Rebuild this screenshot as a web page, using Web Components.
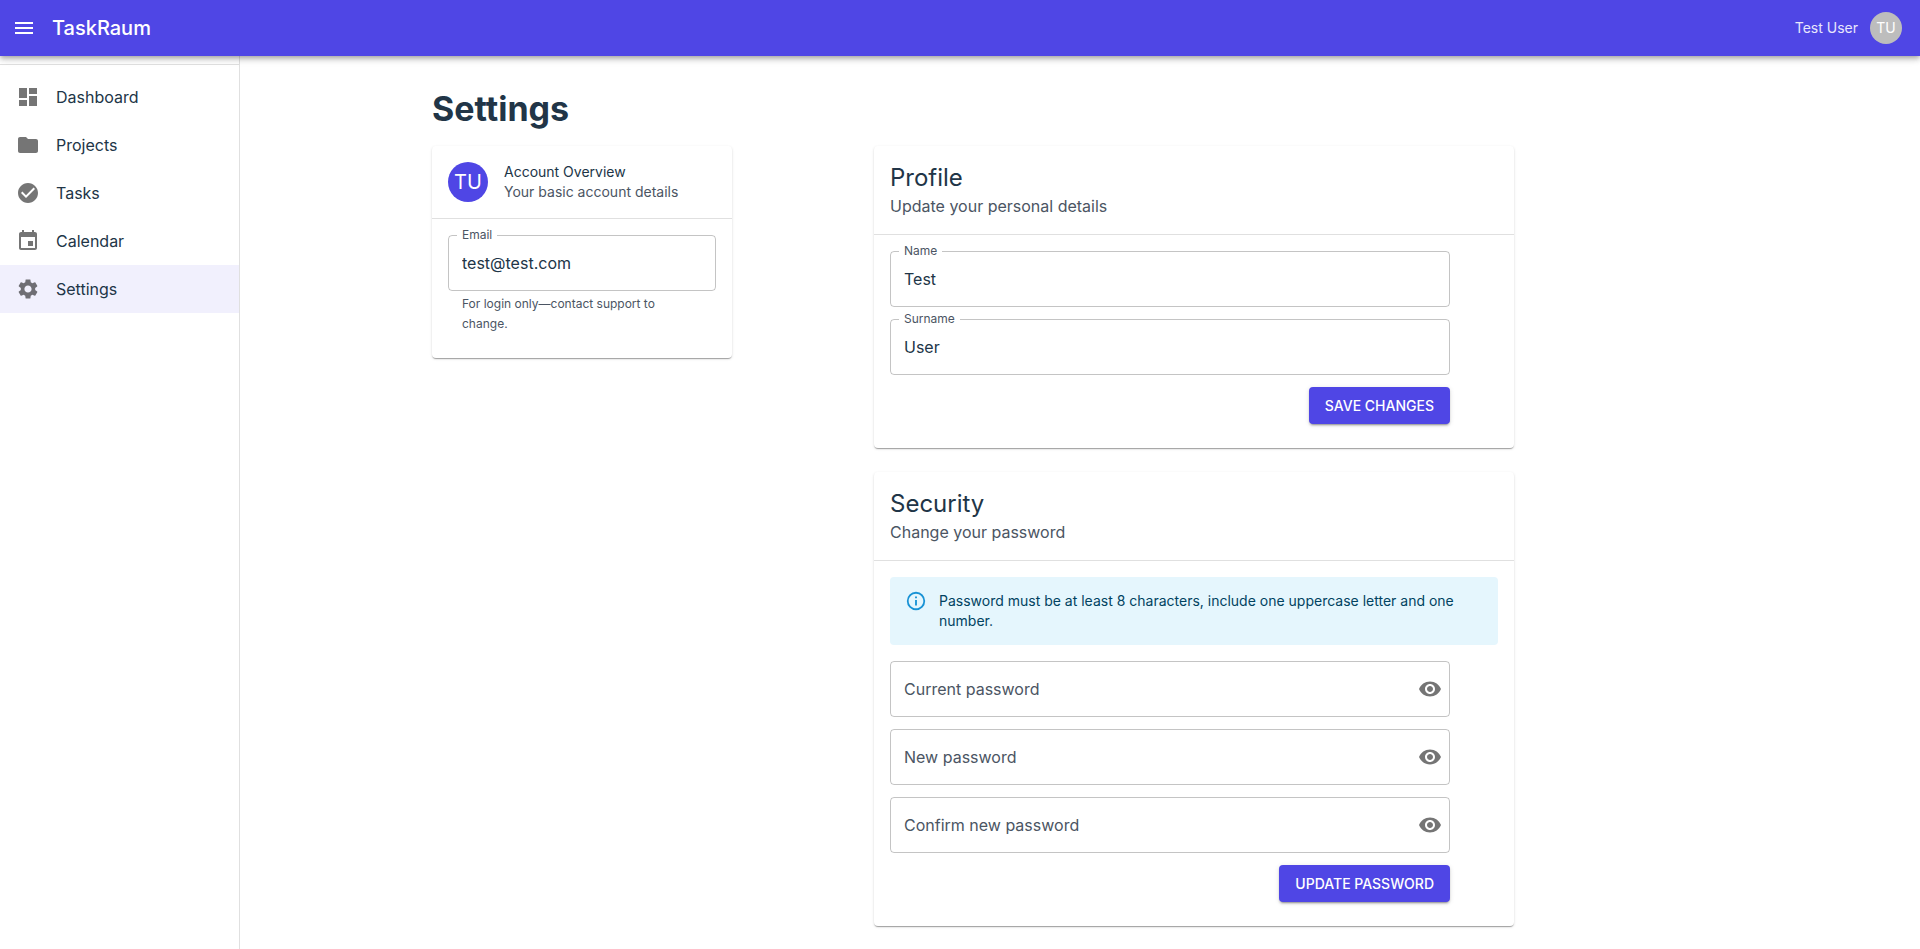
<!DOCTYPE html>
<html lang="en">
<head>
<meta charset="utf-8">
<meta name="viewport" content="width=device-width, initial-scale=1">
<title>TaskRaum – Settings</title>
<style>
  :root {
    --primary: #4f46e5;
    --primary-dark: #4338ca;
    --selected: rgba(79, 70, 229, 0.08);
    --text: #213547;
    --muted: #4b5563;
    --icon: rgba(0, 0, 0, 0.54);
    --divider: rgba(0, 0, 0, 0.12);
    --outline: rgba(0, 0, 0, 0.23);
    --surface: #fff;
  }
  body {
    margin: 0;
    background: var(--surface);
    color: var(--text);
    font-family: Inter, Roboto, sans-serif;
    font-size: 16px;
    line-height: 24px;
  }
</style>
</head>
<body>
<tr-shell>
  <tr-header slot="header" brand="TaskRaum" user="Test User" initials="TU"></tr-header>
  <tr-sidebar slot="sidebar">
    <tr-nav-item icon="dashboard" href="#dashboard">Dashboard</tr-nav-item>
    <tr-nav-item icon="folder" href="#projects">Projects</tr-nav-item>
    <tr-nav-item icon="check" href="#tasks">Tasks</tr-nav-item>
    <tr-nav-item icon="event" href="#calendar">Calendar</tr-nav-item>
    <tr-nav-item icon="settings" href="#settings" current>Settings</tr-nav-item>
  </tr-sidebar>
  <tr-settings-page></tr-settings-page>
</tr-shell>

<script>
const ICONS = {
  menu: 'M3 18h18v-2H3zm0-5h18v-2H3zm0-7v2h18V6z',
  dashboard: 'M3 13h8V3H3zm0 8h8v-6H3zm10 0h8V11h-8zm0-18v6h8V3z',
  folder: 'M10 4H4c-1.1 0-1.99.9-1.99 2L2 18c0 1.1.9 2 2 2h16c1.1 0 2-.9 2-2V8c0-1.1-.9-2-2-2h-8z',
  check: 'M12 2C6.48 2 2 6.48 2 12s4.48 10 10 10 10-4.48 10-10S17.52 2 12 2m-2 15-5-5 1.41-1.41L10 14.17l7.59-7.59L19 8z',
  event: 'M17 12h-5v5h5zM16 1v2H8V1H6v2H5c-1.11 0-1.99.9-1.99 2L3 19c0 1.1.89 2 2 2h14c1.1 0 2-.9 2-2V5c0-1.1-.9-2-2-2h-1V1zm3 18H5V8h14z',
  settings: 'M19.14 12.94c.04-.3.06-.61.06-.94 0-.32-.02-.64-.07-.94l2.03-1.58c.18-.14.23-.41.12-.61l-1.92-3.32c-.12-.22-.37-.29-.59-.22l-2.39.96c-.5-.38-1.03-.7-1.62-.94l-.36-2.54c-.04-.24-.24-.41-.48-.41h-3.84c-.24 0-.43.17-.47.41l-.36 2.54c-.59.24-1.13.57-1.62.94l-2.39-.96c-.22-.08-.47 0-.59.22L2.74 8.87c-.12.21-.08.47.12.61l2.03 1.58c-.05.3-.09.63-.09.94s.02.64.07.94l-2.03 1.58c-.18.14-.23.41-.12.61l1.92 3.32c.12.22.37.29.59.22l2.39-.96c.5.38 1.03.7 1.62.94l.36 2.54c.05.24.24.41.48.41h3.84c.24 0 .44-.17.47-.41l.36-2.54c.59-.24 1.13-.56 1.62-.94l2.39.96c.22.08.47 0 .59-.22l1.92-3.32c.12-.22.07-.47-.12-.61zM12 15.6c-1.98 0-3.6-1.62-3.6-3.6s1.62-3.6 3.6-3.6 3.6 1.62 3.6 3.6-1.62 3.6-3.6 3.6',
  info: 'M11,9H13V7H11M12,20C7.59,20 4,16.41 4,12C4,7.59 7.59,4 12,4C16.41,4 20,7.59 20,12C20,16.41 16.41,20 12,20M12,2A10,10 0 0,0 2,12A10,10 0 0,0 12,22A10,10 0 0,0 22,12A10,10 0 0,0 12,2M11,17H13V11H11V17Z',
  eye: 'M12 4.5C7 4.5 2.73 7.61 1 12c1.73 4.39 6 7.5 11 7.5s9.27-3.11 11-7.5c-1.73-4.39-6-7.5-11-7.5M12 17c-2.76 0-5-2.24-5-5s2.24-5 5-5 5 2.24 5 5-2.24 5-5 5m0-8c-1.66 0-3 1.34-3 3s1.34 3 3 3 3-1.34 3-3-1.34-3-3-3'
};

const icon = (name) =>
  `<svg viewBox="0 0 24 24" fill="currentColor" aria-hidden="true"><path d="${ICONS[name]}"/></svg>`;

const define = (name, render, after) =>
  customElements.define(name, class extends HTMLElement {
    constructor() {
      super();
      this.attachShadow({ mode: 'open' });
    }
    connectedCallback() {
      if (this.shadowRoot.childNodes.length) return;
      this.shadowRoot.innerHTML = render(this);
      if (after) after(this.shadowRoot, this);
    }
  });

define('tr-shell', () => `
  <style>
    :host { display: flex; flex-direction: column; min-height: 100vh; }
    .body { flex: 1; display: flex; }
    main { flex: 1; min-width: 0; }
  </style>
  <slot name="header"></slot>
  <div class="body">
    <slot name="sidebar"></slot>
    <main><slot></slot></main>
  </div>`);

define('tr-avatar', () => `
  <style>
    :host { display: flex; align-items: center; justify-content: center; flex: none;
      width: 40px; height: 40px; border-radius: 50%; background: var(--primary);
      color: #fff; font-size: 20px; line-height: 20px; }
    :host([small]) { width: 32px; height: 32px; background: #bdbdbd; font-size: 14px; }
  </style>
  <slot></slot>`);

define('tr-header', (el) => `
  <style>
    :host { display: block; position: relative; z-index: 1; }
    header { display: flex; align-items: center; height: 56px; padding: 0 18px 0 4px;
      background: var(--primary); color: #fff;
      box-shadow: 0 2px 4px -1px rgba(0,0,0,.2), 0 4px 5px 0 rgba(0,0,0,.14), 0 1px 10px 0 rgba(0,0,0,.12); }
    button { display: flex; padding: 8px; border: 0; border-radius: 50%;
      background: none; color: inherit; cursor: pointer; }
    svg { width: 24px; height: 24px; }
    .brand { flex: 1; margin-left: 8px; font-size: 20px; font-weight: 500; line-height: 32px; }
    .user { margin-right: 12px; font-size: 14px; line-height: 20px; color: #e8e7fc; }
  </style>
  <header>
    <button type="button" aria-label="Toggle menu">${icon('menu')}</button>
    <div class="brand">${el.getAttribute('brand')}</div>
    <span class="user">${el.getAttribute('user')}</span>
    <tr-avatar small>${el.getAttribute('initials')}</tr-avatar>
  </header>`);

define('tr-sidebar', () => `
  <style>
    :host { display: block; box-sizing: border-box; flex: none; width: 240px;
      padding-top: 8px; border-right: 1px solid #e0e0e0; }
    nav { padding: 8px 0; border-top: 1px solid #e0e0e0; }
  </style>
  <nav aria-label="Main"><slot></slot></nav>`);

define('tr-nav-item', (el) => `
  <style>
    :host { display: block; }
    :host([current]) { background: var(--selected); }
    a { display: flex; align-items: center; gap: 16px; padding: 12px 16px;
      color: inherit; text-decoration: none; }
    svg { width: 24px; height: 24px; color: var(--icon); }
  </style>
  <a href="${el.getAttribute('href')}"${el.hasAttribute('current') ? ' aria-current="page"' : ''}>
    ${icon(el.getAttribute('icon'))}<span><slot></slot></span>
  </a>`);

define('tr-card', () => `
  <style>
    :host { display: block; border-radius: 4px; background: var(--surface);
      box-shadow: 0 2px 1px -1px rgba(0,0,0,.2), 0 1px 1px 0 rgba(0,0,0,.14), 0 1px 3px 0 rgba(0,0,0,.12); }
    header { display: flex; align-items: center; gap: 16px; padding: 16px;
      border-bottom: 1px solid var(--divider); }
    h2, p { margin: 0; font-weight: 400; }
    h2 { font-size: 24px; line-height: 32px; }
    p { color: var(--muted); }
    :host([compact]) h2, :host([compact]) p { font-size: 14px; line-height: 20px; }
    .content { padding: 16px 16px 24px; }
  </style>
  <header>
    <slot name="avatar"></slot>
    <div>
      <h2><slot name="title"></slot></h2>
      <p><slot name="subtitle"></slot></p>
    </div>
  </header>
  <div class="content"><slot></slot></div>`);

define('tr-field', (el) => {
  const type = el.getAttribute('type') || 'text';
  const secret = type === 'password';
  const help = el.getAttribute('help');
  return `
  <style>
    :host { display: block; }
    .box { position: relative; display: flex; align-items: center; box-sizing: border-box;
      height: 56px; border: 1px solid var(--outline); border-radius: 4px; }
    .box:focus-within { border-color: var(--primary); }
    label { position: absolute; left: 8px; top: -11px; padding: 0 5px; background: var(--surface);
      color: var(--muted); font-size: 12px; line-height: 20px; pointer-events: none; }
    .rest label { top: 15px; font-size: 16px; line-height: 24px; background: none; }
    input { flex: 1; min-width: 0; box-sizing: border-box; height: 100%; padding: 0 13px;
      border: 0; outline: 0; background: none; color: inherit; font: inherit; }
    button { display: flex; padding: 7px; border: 0; border-radius: 50%;
      background: none; color: var(--icon); cursor: pointer; }
    svg { width: 24px; height: 24px; }
    p { margin: 3px 14px 0; color: var(--muted); font-size: 12px; line-height: 20px; }
  </style>
  <div class="box${secret ? ' rest' : ''}">
    <label for="control">${el.getAttribute('label')}</label>
    <input id="control" type="${type}" value="${el.getAttribute('value') || ''}"
      ${el.hasAttribute('readonly') ? 'readonly' : ''} ${help ? 'aria-describedby="help"' : ''}>
    ${secret ? `<button type="button" aria-label="Show password">${icon('eye')}</button>` : ''}
  </div>
  ${help ? `<p id="help">${help}</p>` : ''}`;
}, (root, el) => {
  const toggle = root.querySelector('button');
  if (!toggle) return;
  const input = root.querySelector('input');
  const box = root.querySelector('.box');
  const settle = () => box.classList.toggle('rest', !input.value && root.activeElement !== input);
  input.addEventListener('focus', settle);
  input.addEventListener('blur', settle);
  toggle.addEventListener('click', () => {
    input.type = input.type === 'password' ? 'text' : 'password';
  });
});

define('tr-button', () => `
  <style>
    :host { display: block; }
    button { display: block; height: 37px; padding: 0 16px; border: 0; border-radius: 4px;
      background: var(--primary); color: #fff; cursor: pointer;
      font: inherit; font-size: 14px; font-weight: 500; line-height: 24px; text-transform: uppercase;
      box-shadow: 0 3px 1px -2px rgba(0,0,0,.2), 0 2px 2px 0 rgba(0,0,0,.14), 0 1px 5px 0 rgba(0,0,0,.12); }
    button:hover { background: var(--primary-dark); }
  </style>
  <button type="button"><slot></slot></button>`);

define('tr-alert', () => `
  <style>
    :host { display: flex; gap: 12px; padding: 13px 15px; border-radius: 4px;
      background: #e5f6fd; color: #014361; font-size: 14px; line-height: 20px; }
    svg { flex: none; width: 22px; height: 22px; color: #0288d1; opacity: .9; }
    div { padding: 1px 0; }
  </style>
  ${icon('info')}
  <div role="note"><slot></slot></div>`);

define('tr-settings-page', () => `
  <style>
    :host { display: block; padding: 32px 24px 16px; }
    .container { max-width: 1296px; margin: 0 auto; }
    h1 { margin: 0 0 16px; font-size: 34px; font-weight: 700; line-height: 42px; }
    .columns { display: grid; grid-template-columns: 1fr 2fr; gap: 15px; align-items: start; }
    .account { max-width: 300px; }
    .stack { display: grid; gap: 24px; max-width: 640px; }
    form { display: grid; gap: 12px; max-width: 560px; }
    tr-button { justify-self: end; }
    tr-alert { margin-bottom: 16px; }
  </style>
  <div class="container">
    <h1>Settings</h1>
    <div class="columns">
      <tr-card class="account" compact>
        <tr-avatar slot="avatar">TU</tr-avatar>
        <span slot="title">Account Overview</span>
        <span slot="subtitle">Your basic account details</span>
        <tr-field label="Email" type="email" value="test@test.com" readonly
          help="For login only—contact support to change."></tr-field>
      </tr-card>
      <div class="stack">
        <tr-card>
          <span slot="title">Profile</span>
          <span slot="subtitle">Update your personal details</span>
          <form>
            <tr-field label="Name" value="Test"></tr-field>
            <tr-field label="Surname" value="User"></tr-field>
            <tr-button>Save changes</tr-button>
          </form>
        </tr-card>
        <tr-card>
          <span slot="title">Security</span>
          <span slot="subtitle">Change your password</span>
          <tr-alert>Password must be at least 8 characters, include one uppercase letter and one number.</tr-alert>
          <form>
            <tr-field label="Current password" type="password"></tr-field>
            <tr-field label="New password" type="password"></tr-field>
            <tr-field label="Confirm new password" type="password"></tr-field>
            <tr-button>Update password</tr-button>
          </form>
        </tr-card>
      </div>
    </div>
  </div>`);
</script>
</body>
</html>
